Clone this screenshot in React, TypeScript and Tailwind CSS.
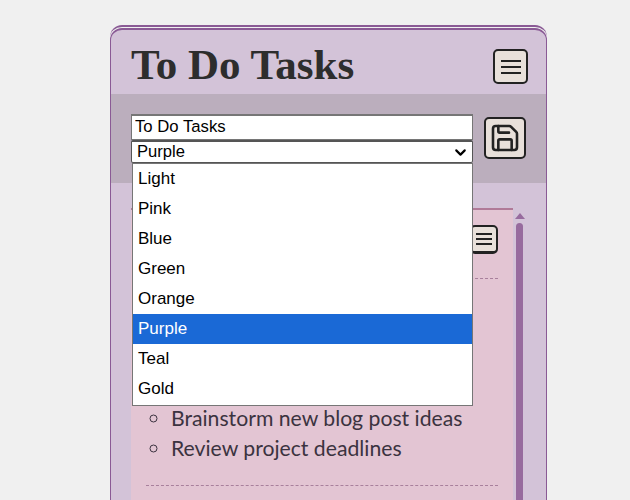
import { ChevronDown, Save } from "lucide-react";

const themes = ["Light", "Pink", "Blue", "Green", "Orange", "Purple", "Teal", "Gold"];

function MenuLines({ width, gap }: { width: number; gap: number }) {
  return (
    <svg width={width} height={gap * 2 + 2} viewBox={`0 0 ${width} ${gap * 2 + 2}`} stroke="#222" strokeWidth="2">
      <line x1="0" x2={width} y1="1" y2="1" />
      <line x1="0" x2={width} y1={gap + 1} y2={gap + 1} />
      <line x1="0" x2={width} y1={gap * 2 + 1} y2={gap * 2 + 1} />
    </svg>
  );
}

export default function App() {
  return (
    <div className="h-[500px] overflow-hidden bg-[#f0f0f0] pt-[25px] pl-[110px] font-['Liberation_Sans',sans-serif]">
      <div className="w-[437px] rounded-t-[12px] border-t-2 border-[#8a5a95] pt-px">
        <div className="h-[480px] overflow-hidden rounded-t-[12px] border border-t-2 border-b-0 border-[#8a5a95] bg-[#d3c3d8]">
          <header className="flex h-[64px] items-center justify-between pr-[18px] pl-5">
            <h1 className="mt-[4px] font-['Liberation_Serif',serif] text-[43px] leading-none font-bold text-[#2d2d2d]">To Do Tasks</h1>
            <button className="mt-[9px] flex h-[35px] w-[35px] items-center justify-center rounded-[5px] border-2 border-[#222] bg-[#e8e0da]">
              <MenuLines width={20} gap={6} />
            </button>
          </header>

          <div className="relative flex h-[89px] gap-[11px] bg-[#bbaebd] pt-5 pl-5">
            <div className="relative w-[342px]">
              <input
                readOnly
                value="To Do Tasks"
                className="block h-[26px] w-full border border-t-2 border-[#767676] bg-white pr-1 pb-[2px] pl-[3px] text-[16.7px] text-black outline-none"
              />
              <div className="flex h-[23px] items-center justify-between rounded-[2px] border border-t-2 border-[#555] bg-white pr-[3px] pl-[5px] text-[16.6px] text-black">
                Purple
                <ChevronDown size={17} strokeWidth={3} />
              </div>
              <ul className="absolute top-[49px] left-px z-10 w-[341px] border border-[#767676] bg-white pb-px text-[17px] text-black">
                {themes.map((t) => (
                  <li key={t} className={"flex h-[30px] items-center pl-[5px] " + (t === "Purple" ? "bg-[#1a69d6] text-white" : "")}>
                    {t}
                  </li>
                ))}
              </ul>
            </div>
            <button className="mt-[3px] flex h-[42px] w-[42px] items-center justify-center rounded-[5px] border-2 border-[#222] bg-[#e8e0da] text-[#222]">
              <Save size={32} strokeWidth={2.6} absoluteStrokeWidth />
            </button>
          </div>

          <div className="flex pt-[25px] pl-5">
            <section className="h-[300px] w-[382px] border-t-2 border-[#b07a98] bg-[#e3c5d3] px-[15px] pt-[15px]">
              <div className="flex justify-end">
                <button className="flex h-[29px] w-[28px] items-center justify-center rounded-[5px] border-2 border-b-[3px] border-[#222] bg-[#e8e0da]">
                  <MenuLines width={16} gap={5} />
                </button>
              </div>
              <div className="mt-[24px] border-t border-dashed border-[#a8809c]" />
              <ul className="mt-[124px] list-[circle] pl-[25px] font-['Lato',sans-serif] text-[21.2px] leading-[30px] text-[#3b3340] marker:text-[#3b3340]">
                <li>Brainstorm new blog post ideas</li>
                <li>Review project deadlines</li>
              </ul>
              <div className="mt-[22px] border-t border-dashed border-[#a8809c]" />
            </section>
            <div className="ml-[3px] flex w-[7px] flex-col items-center pt-[5px]">
              <div className="h-0 w-0 border-x-[5px] border-b-[6px] border-x-transparent border-b-[#976b9e]" />
              <div className="mt-1 h-[300px] w-[7px] rounded-t-full bg-[#976b9e]" />
            </div>
          </div>
        </div>
      </div>
    </div>
  );
}
